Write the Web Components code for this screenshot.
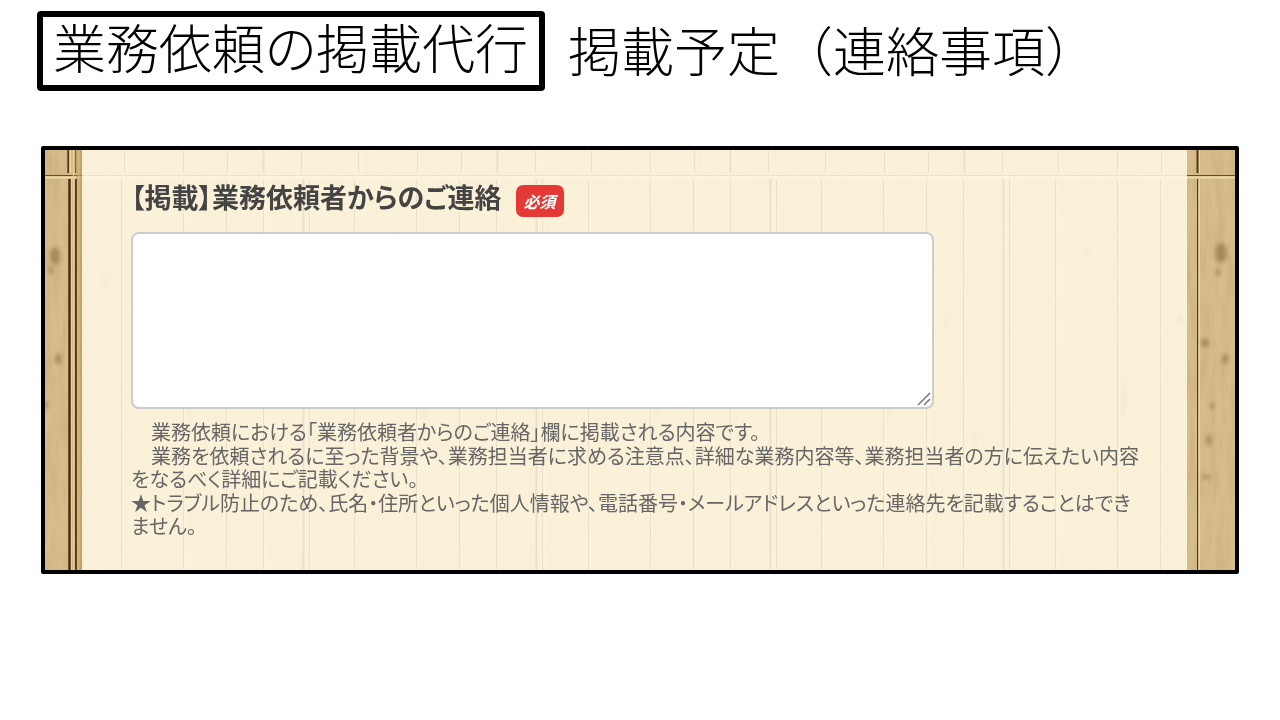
<!DOCTYPE html>
<html lang="ja">
<head>
<meta charset="utf-8">
<meta name="viewport" content="width=device-width, initial-scale=1">
<title>業務依頼の掲載代行</title>
<style>
  body { margin: 0; background: #fff; font-family: "Noto Sans CJK JP", sans-serif; }
</style>
</head>
<body>
<slide-page>
  <slide-title slot="title">
    <span slot="boxed">業務依頼の掲載代行</span>
    <span>掲載予定（連絡事項）</span>
  </slide-title>
  <wood-frame>
    <contact-field label="【掲載】業務依頼者からのご連絡">
      <required-badge slot="badge">必須</required-badge>
      <help-text slot="help">
        <p>　業務依頼における「業務依頼者からのご連絡」欄に掲載される内容です。</p>
        <p>　業務を依頼されるに至った背景や、業務担当者に求める注意点、詳細な業務内容等、業務担当者の方に伝えたい内容をなるべく詳細にご記載ください。</p>
        <p>★トラブル防止のため、氏名・住所といった個人情報や、電話番号・メールアドレスといった連絡先を記載することはできません。</p>
      </help-text>
    </contact-field>
  </wood-frame>
</slide-page>
<script>
const define = (name, html, setup) => customElements.define(name, class extends HTMLElement {
  constructor() {
    super();
    this.attachShadow({ mode: 'open' }).innerHTML = html;
  }
  connectedCallback() { if (setup) setup(this, this.shadowRoot); }
});

define('slide-page', `
  <style>
    :host { display: flex; flex-direction: column; gap: 55px; padding: 11px 41px 40px; }
    header { margin-left: -4px; }
  </style>
  <header><slot name="title"></slot></header>
  <main><slot></slot></main>`);

define('slide-title', `
  <style>
    :host { display: block; color: #000; }
    h1 { margin: 0; display: flex; flex-wrap: wrap; align-items: flex-start; column-gap: 23px;
         font-size: 53px; line-height: 76px; font-weight: 300; }
    .box { border: 6px solid #000; border-radius: 4px; padding: 0 11px 10px 10px; flex: none;
           line-height: 58px; font-feature-settings: "palt"; }
  </style>
  <h1><span class="box"><slot name="boxed"></slot></span><slot></slot></h1>`);

/* Plank wall behind a translucent cream sheet; the tile repeats every 467px. */
const SEAMS_TOP = [[79, 1], [138, 1], [182, 1], [218, 2], [256, 1]];
const SEAMS_LOW = [[76, 1], [138, 1], [181, 1], [218, 1], [258, 2], [264, 1]];
const seams = (list, shift, y1, y2) => list.map(([x, w]) => {
  const p = (x + shift) % 467;
  return `<path d="M${p + .5} ${y1}V${y2}" stroke="#573719" stroke-width="${w}"/>
          <path d="M${p + 2.5} ${y1}V${y2}" stroke="#ecd3a0" stroke-width="1"/>`;
}).join('');
const knots = shift => [[108, 100, 3, 6], [144, 250, 4, 20], [60, 130, 3, 5], [200, 170, 3, 6], [230, 290, 3, 6]]
  .map(([x, y, a, b]) => `<ellipse cx="${(x + shift) % 467}" cy="${y}" rx="${a}" ry="${b}"/>`).join('');
const edgeKnots = `
  <ellipse cx="10" cy="106" rx="5" ry="9"/><ellipse cx="6" cy="120" rx="2" ry="4"/>
  <ellipse cx="13" cy="209" rx="3" ry="5"/><ellipse cx="1" cy="255" rx="2" ry="4"/>
  <svg x="100%" y="0" width="1" height="1" overflow="visible">
    <ellipse cx="-14" cy="103" rx="6" ry="10"/><ellipse cx="-17" cy="122" rx="2" ry="4"/>
    <ellipse cx="-30" cy="193" rx="4" ry="4"/><ellipse cx="-10" cy="209" rx="3" ry="5"/>
    <ellipse cx="-23" cy="256" rx="2" ry="3"/><ellipse cx="-29" cy="327" rx="4" ry="2"/>
  </svg>`;

define('wood-frame', `
  <style>
    :host { display: grid; grid-template-columns: 37px minmax(0, 1fr) 48px;
            border: 4px solid #000; border-radius: 2px; background: #d6bd8b; position: relative; overflow: hidden; }
    .wall { position: absolute; inset: 0; width: 100%; height: 100%; }
    section { grid-column: 2; position: relative; background: rgba(255, 248, 228, .88); padding: 25px 40px 31px 49px; }
  </style>
  <svg class="wall" aria-hidden="true">
    <defs>
      <filter id="soft" x="-1" y="-1" width="3" height="3"><feGaussianBlur stdDeviation="2"/></filter>
      <filter id="grain" x="0" y="0" width="100%" height="100%">
        <feTurbulence type="fractalNoise" baseFrequency=".14 .02" numOctaves="4" seed="8"/>
        <feColorMatrix values="0 0 0 0 .48  0 0 0 0 .34  0 0 0 0 .14  1.4 0 0 0 -.5"/>
      </filter>
      <pattern id="planks" width="467" height="900" patternUnits="userSpaceOnUse">
        <g fill="#8a6b36" opacity=".5" filter="url(#soft)">${knots(0)}${knots(234)}</g>
        ${seams(SEAMS_TOP, 0, 0, 23)}${seams(SEAMS_TOP, 234, 0, 23)}
        ${seams(SEAMS_LOW, 0, 29, 900)}${seams(SEAMS_LOW, 233, 29, 900)}
        <path d="M0 25.5H467" stroke="#6b4a22" stroke-width="1"/>
        <path d="M0 27.5H467" stroke="#f0d9a6" stroke-width="2"/>
      </pattern>
      <linearGradient id="edge">
        <stop offset="0" stop-color="#b8995f"/><stop offset=".5" stop-color="#d0b57e"/><stop offset="1" stop-color="#a98a52"/>
      </linearGradient>
    </defs>
    <rect width="100%" height="100%" filter="url(#grain)" opacity=".5"/>
    <rect width="100%" height="100%" fill="url(#planks)"/>
    <g fill="#7d6234" opacity=".55" filter="url(#soft)">${edgeKnots}</g>
    <rect x="31" y="0" width="6" height="100%" fill="url(#edge)" opacity=".7"/>
    <path d="M24.5 29V900" stroke="#4b2b12" stroke-width="2"/>
    <path d="M31.5 29V900" stroke="#6b4520" stroke-width="1"/>
    <path d="M22.5 0V23M30.5 0V23" stroke="#80602f" stroke-width="1"/>
    <path d="M28.5 0V900" stroke="#e8ce98" stroke-width="1"/>
  </svg>
  <section><slot></slot></section>`);

define('contact-field', `
  <style>
    :host { display: block; }
    .head { display: flex; align-items: center; gap: 14px; height: 44px; }
    label { font-size: 27px; line-height: 32px; font-weight: 700; color: #444; font-feature-settings: "palt"; }
    slot[name=badge] { display: block; }
    textarea { display: block; box-sizing: border-box; width: 100%; max-width: 803px; height: 177px; margin: 13px 0;
               border: 2px solid #ccc; border-radius: 8px; background: #fff; padding: 8px 12px;
               font: 20px/24px "Noto Sans CJK JP", sans-serif; resize: both; outline: none; }
    textarea::-webkit-resizer {
      background: url("data:image/svg+xml,%3Csvg xmlns='http://www.w3.org/2000/svg' width='15' height='15'%3E%3Cpath d='M1 13L13 1M7 13L13 7' stroke='%23777' stroke-width='1.5'/%3E%3C/svg%3E") right bottom no-repeat; }
  </style>
  <div class="head"><label for="message"></label><slot name="badge"></slot></div>
  <textarea id="message" required></textarea>
  <slot name="help"></slot>`,
  (host, root) => { root.querySelector('label').textContent = host.getAttribute('label'); });

define('required-badge', `
  <style>
    :host { display: block; background: #e53935; color: #fff; border-radius: 7px; padding: 4px 8px;
            font-size: 16px; line-height: 24px; font-weight: 700; font-style: italic; margin-top: 8px; }
  </style>
  <slot></slot>`);

define('help-text', `
  <style>
    :host { display: flex; flex-direction: column; gap: 1px; font-size: 20px; line-height: 23px; color: #666;
            font-family: "Liberation Sans", "Noto Sans CJK JP", sans-serif; font-feature-settings: "palt"; }
    ::slotted(p) { margin: 0; }
  </style>
  <slot></slot>`);
</script>
</body>
</html>
